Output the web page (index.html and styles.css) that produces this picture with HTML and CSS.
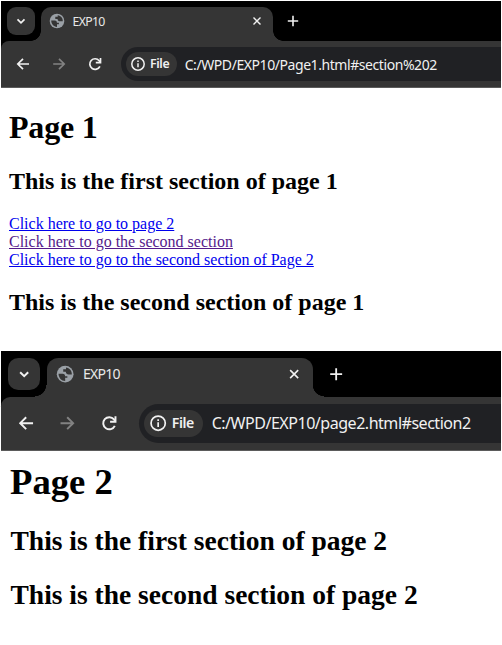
FILE: index.html
```
<!DOCTYPE html>
<html lang="en">
<head>
<meta charset="utf-8">
<title>EXP10</title>
<link rel="stylesheet" href="styles.css">
</head>
<body>
<svg class="defs" aria-hidden="true">
  <symbol id="chevron" viewBox="0 0 16 16"><path d="M4.500 6.300 8 9.800l3.500-3.500"/></symbol>
  <symbol id="globe" viewBox="0 0 16 16"><circle class="disc" cx="8" cy="8" r="7.300"/><path class="land" d="M2.200 7.600h3.500c1.800 0 2.200 1 2.200 2.200h2v1.400H8v2.700c-3.300 0-5.700-2.700-5.800-6.300zM8.700 2.200v1.500H6.300v2.200h2.200c.3 1.700 1 2.300 2.400 2.300h2.900c.2-3-2-5.700-5.100-6z"/></symbol>
  <symbol id="close" viewBox="0 0 16 16"><path d="m4.500 4.500 7 7m0-7-7 7"/></symbol>
  <symbol id="plus" viewBox="0 0 16 16"><path d="M8 2.800v10.400M2.800 8h10.400"/></symbol>
  <symbol id="back" viewBox="0 0 16 16"><path d="M14 8H3m5-5.200L2.800 8 8 13.200"/></symbol>
  <symbol id="forward" viewBox="0 0 16 16"><path d="M2.200 8H13M8 2.800 13.200 8 8 13.200"/></symbol>
  <symbol id="reload" viewBox="0 0 16 16"><path d="M12.900 10.300A5.300 5.300 0 1 1 12.200 4.700L13.200 6"/><path d="M13.500 2v4.700H8.800"/></symbol>
  <symbol id="info" viewBox="0 0 16 16"><circle cx="8" cy="8" r="6.200"/><path d="M8 7.300v4M8 4.500v1.600"/></symbol>
</svg>

<section class="window first">
  <div class="tabstrip">
    <div class="tab-search"><svg class="icon"><use href="#chevron"/></svg></div>
    <div class="tab">
      <svg class="icon globe"><use href="#globe"/></svg>
      <span class="tab-title">EXP10</span>
      <svg class="icon close"><use href="#close"/></svg>
    </div>
    <svg class="icon plus"><use href="#plus"/></svg>
  </div>
  <div class="toolbar">
    <svg class="icon nav"><use href="#back"/></svg>
    <svg class="icon nav dim"><use href="#forward"/></svg>
    <svg class="icon nav"><use href="#reload"/></svg>
    <div class="omnibox">
      <div class="chip"><svg class="icon info"><use href="#info"/></svg><span class="scheme">File</span></div>
      <span class="url">C:/WPD/EXP10/Page1.html#section%202</span>
    </div>
  </div>
  <main class="page">
    <h1>Page 1</h1>
    <h2>This is the first section of page 1</h2>
    <nav class="links">
      <a href="#">Click here to go to page 2</a><br>
      <a class="visited" href="#">Click here to go the second section</a><br>
      <a href="#">Click here to go to the second section of Page 2</a>
    </nav>
    <h2>This is the second section of page 1</h2>
  </main>
</section>

<section class="window second">
  <div class="tabstrip">
    <div class="tab-search"><svg class="icon"><use href="#chevron"/></svg></div>
    <div class="tab">
      <svg class="icon globe"><use href="#globe"/></svg>
      <span class="tab-title">EXP10</span>
      <svg class="icon close"><use href="#close"/></svg>
    </div>
    <svg class="icon plus"><use href="#plus"/></svg>
  </div>
  <div class="toolbar">
    <svg class="icon nav"><use href="#back"/></svg>
    <svg class="icon nav dim"><use href="#forward"/></svg>
    <svg class="icon nav"><use href="#reload"/></svg>
    <div class="omnibox">
      <div class="chip"><svg class="icon info"><use href="#info"/></svg><span class="scheme">File</span></div>
      <span class="url">C:/WPD/EXP10/page2.html#section2</span>
    </div>
  </div>
  <main class="page">
    <h1>Page 2</h1>
    <h2>This is the first section of page 2</h2>
    <h2>This is the second section of page 2</h2>
  </main>
</section>
</body>
</html>
```
FILE: styles.css
```
* { box-sizing: border-box; }
body {
  margin: 0;
  padding: 1px 1px 0;
  width: 502px;
  height: 645px;
  overflow: hidden;
  background: #fff;
  color: #000;
  font-family: "Liberation Serif", serif;
}
.defs { display: none; }

/* --u is one interface unit; the second window is drawn larger */
.window {
  --u: 1px;
  width: 500px;
  background: linear-gradient(#000, #000) 0 0 / 100% calc(52 * var(--u)) no-repeat;
}
.first { height: 350px; }
.second { --u: 1.147px; }

.icon {
  flex: none;
  width: calc(16 * var(--u));
  height: calc(16 * var(--u));
  fill: none;
  stroke: #f1f1f1;
  stroke-width: 1.7;
}
.tabstrip {
  display: flex;
  height: calc(40 * var(--u));
  padding: calc(6 * var(--u)) 0 0 calc(6 * var(--u));
  background: #000;
  font-family: "Noto Sans", sans-serif;
}
.tab-search {
  display: flex;
  align-items: center;
  justify-content: center;
  width: calc(28 * var(--u));
  height: calc(28 * var(--u));
  border-radius: calc(9 * var(--u));
  background: #353535;
}
.tab {
  position: relative;
  display: flex;
  align-items: center;
  width: calc(232 * var(--u));
  margin-left: calc(6 * var(--u));
  padding: 0 calc(8 * var(--u)) calc(6 * var(--u)) calc(8 * var(--u));
  border-radius: calc(10 * var(--u)) calc(10 * var(--u)) 0 0;
  background: #353535;
}
.tab::before,
.tab::after {
  content: "";
  position: absolute;
  bottom: 0;
  width: calc(10 * var(--u));
  height: calc(10 * var(--u));
}
.tab::before {
  right: 100%;
  background: radial-gradient(circle at 0 0, transparent calc(9.500 * var(--u)), #353535 calc(10 * var(--u)));
}
.tab::after {
  left: 100%;
  background: radial-gradient(circle at 100% 0, transparent calc(9.500 * var(--u)), #353535 calc(10 * var(--u)));
}
.disc { fill: #9aa0a6; stroke: none; }
.land { fill: #353535; stroke: none; }
.tab-title {
  flex: 1;
  margin-left: calc(7.500 * var(--u));
  padding-top: calc(1 * var(--u));
  color: #e8e8e8;
  font-size: calc(12.300 * var(--u));
  line-height: calc(16 * var(--u));
  letter-spacing: calc(-0.7 * var(--u));
}
.close { stroke-width: 1.4; }
.plus { margin: calc(6 * var(--u)) 0 0 calc(12 * var(--u)); stroke-width: 1.6; }

.toolbar {
  display: flex;
  align-items: center;
  gap: calc(20 * var(--u));
  height: calc(47 * var(--u));
  padding-left: calc(14 * var(--u));
  border-bottom: 1px solid #5b5b5b;
  border-top-left-radius: calc(8 * var(--u));
  background: #353535;
  font-family: "Noto Sans", sans-serif;
}
.dim { stroke: #828282; }
.omnibox {
  display: flex;
  align-items: center;
  flex: 1;
  height: calc(34 * var(--u));
  margin-left: calc(-2 * var(--u));
  padding-left: calc(5 * var(--u));
  border-radius: calc(17 * var(--u)) 0 0 calc(17 * var(--u));
  background: #202124;
}
.chip {
  display: flex;
  align-items: center;
  width: calc(51 * var(--u));
  height: calc(24 * var(--u));
  padding-left: calc(4 * var(--u));
  border-radius: calc(12 * var(--u));
  background: #353535;
}
.info { stroke-width: 1.5; }
.scheme {
  margin-left: calc(4 * var(--u));
  color: #f1f1f1;
  font-size: calc(12.300 * var(--u));
  font-weight: 600;
  line-height: calc(16 * var(--u));
  letter-spacing: calc(-0.4 * var(--u));
}
.url {
  margin-left: calc(7.700 * var(--u));
  color: #f1f1f1;
  font-size: calc(14 * var(--u));
  letter-spacing: calc(-0.430 * var(--u));
  white-space: nowrap;
}

.page { padding-left: 8px; }
.page h1, .page h2 { margin: 0; white-space: nowrap; }
.first h1 { padding-top: 21px; font-size: 32px; line-height: 37px; letter-spacing: -0.2px; }
.first h2 { margin-top: 22px; font-size: 24px; line-height: 27px; }
.links { margin-top: 20px; font-size: 16px; line-height: 18px; }
.first .links + h2 { margin-top: 20px; }
.links a { color: #0000ee; }
.links .visited { color: #551a8b; }

.second h1 { padding: 10px 0 0 1px; font-size: 36.700px; line-height: 42px; }
.second h2 { padding-left: 1.500px; margin-top: 22px; font-size: 27.500px; line-height: 31px; }
.second h2 + h2 { margin-top: 23px; }
```
